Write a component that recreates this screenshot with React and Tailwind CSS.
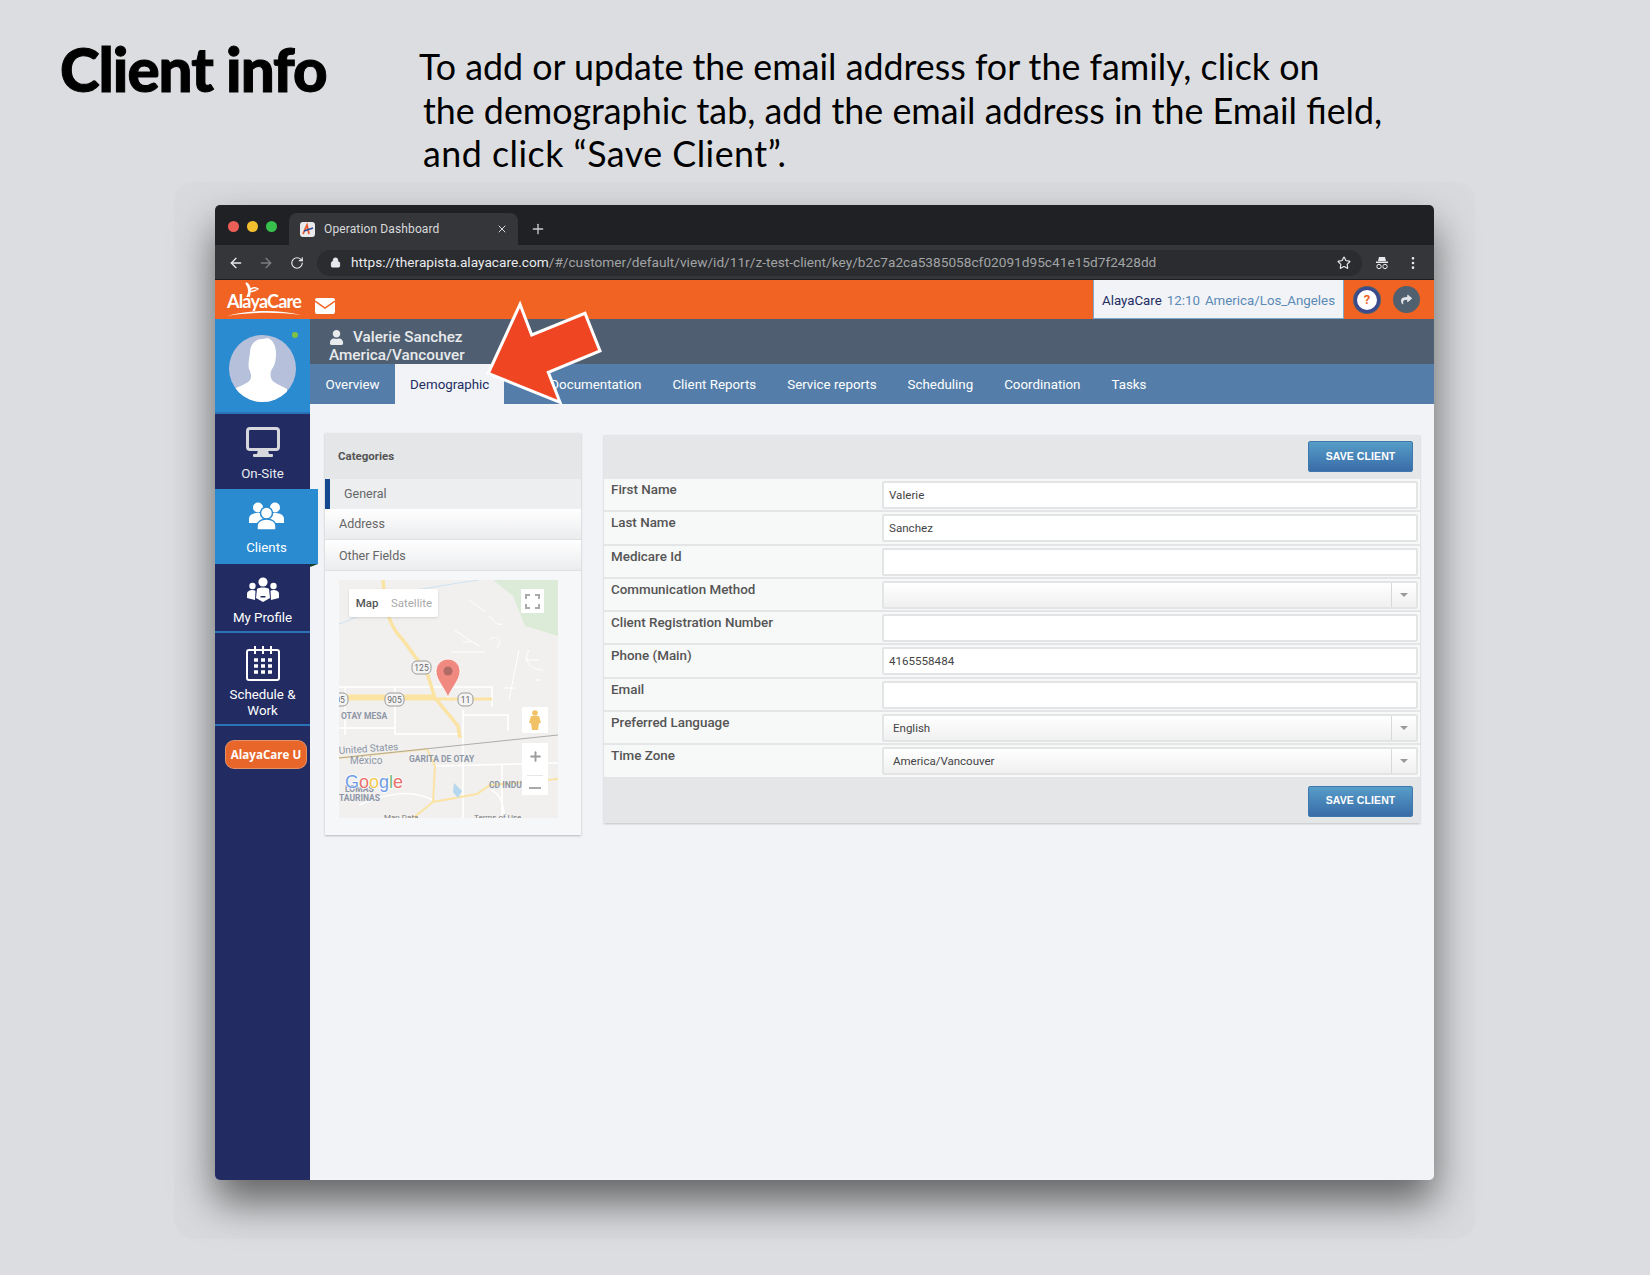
import { ArrowLeft, ArrowRight, RotateCw, Lock, Star, MoreVertical, X, Plus } from "lucide-react";
import { FaUser, FaShare } from "react-icons/fa";

const tabs = [
  { label: "Overview" },
  { label: "Demographic", active: true },
  { label: "Documentation", gap: true },
  { label: "Client Reports" },
  { label: "Service reports" },
  { label: "Scheduling" },
  { label: "Coordination" },
  { label: "Tasks" },
];

const fields = [
  { label: "First Name", value: "Valerie" },
  { label: "Last Name", value: "Sanchez" },
  { label: "Medicare Id", value: "" },
  { label: "Communication Method", value: "", select: true },
  { label: "Client Registration Number", value: "" },
  { label: "Phone (Main)", value: "4165558484" },
  { label: "Email", value: "" },
  { label: "Preferred Language", value: "English", select: true },
  { label: "Time Zone", value: "America/Vancouver", select: true },
];

function MonitorIcon() {
  return (
    <svg width="34" height="32" viewBox="0 0 34 32">
      <rect x="1.5" y="1.5" width="31" height="21" rx="2.5" fill="#222c63" stroke="#d6d8de" strokeWidth="3" />
      <path d="M12 23h10l1 4h-12z" fill="#d6d8de" />
      <rect x="7" y="27" width="20" height="3" rx="1" fill="#d6d8de" />
    </svg>
  );
}

function ClientsIcon() {
  return (
    <svg width="35" height="29" viewBox="0 0 35 29" fill="#fff">
      <circle cx="9" cy="5.500" r="5" />
      <circle cx="26" cy="5.500" r="5" />
      <path d="M0 21v-4c0-4 4-6 9-6s9 2 9 6v4z" />
      <path d="M17 21v-4c0-4 4-6 9-6s9 2 9 6v4z" />
      <circle cx="17.500" cy="11" r="6" stroke="#2a8bd0" strokeWidth="1.500" />
      <path d="M8 28v-4c0-4 4-7 9.500-7s9.500 3 9.500 7v4z" stroke="#2a8bd0" strokeWidth="1.500" />
    </svg>
  );
}

function TeamIcon() {
  return (
    <svg width="34" height="26" viewBox="0 0 34 26" fill="#fff">
      <circle cx="17" cy="5" r="4.600" />
      <path d="M11 12c2-2 10-2 12 0l1 9-7 4-7-4z" />
      <circle cx="6.500" cy="9" r="3.200" />
      <path d="M1 21v-4c0-3 3-4 5.500-4s3 1 3 1l-.5 9z" />
      <circle cx="27.500" cy="9" r="3.200" />
      <path d="M33 21v-4c0-3-3-4-5.500-4s-3 1-3 1l.5 9z" />
      <rect x="14.500" y="19" width="5" height="1.500" fill="#222c63" />
    </svg>
  );
}

function CalendarIcon() {
  return (
    <svg width="34" height="35" viewBox="0 0 34 35" fill="none" stroke="#fff">
      <rect x="1" y="4" width="32" height="30" rx="2" strokeWidth="2" />
      <path d="M9 0v8M17 0v8M25 0v8" strokeWidth="2" />
      <path d="M8 14h4M15 14h4M22 14h4M8 20h4M15 20h4M22 20h4M8 26h4M15 26h4M22 26h4" strokeWidth="3.500" />
    </svg>
  );
}

function Sidebar() {
  return (
    <aside className="w-[95px] shrink-0 bg-[#222c63] text-white text-[13.300px] leading-[16px] text-center">
      <div className="h-[95px] bg-[#2a8bd0] flex items-start justify-center pt-[16px] relative border-b-2 border-[#2a73b8]">
        <div className="w-[67px] h-[67px] rounded-full bg-[#b7c0da] overflow-hidden">
          <svg viewBox="0 0 67 67" className="w-full h-full" fill="#fff">
            <path d="M21 18c0-9 6-14 12-14 3 0 4-1 6-1 5 2 8 8 8 15 0 7-1 12-4 16-2 3-2 8 0 11 2 3 10 6 15 9v13H5V54c5-3 13-5 16-9 2-3 1-7-1-11-1-4 0-10 1-16z" />
          </svg>
        </div>
        <span className="absolute right-[12px] top-[13px] w-[6px] h-[6px] rounded-full bg-[#7ec23f]" />
      </div>
      <div className="h-[75px] flex flex-col items-center pt-[13px] gap-[7px] text-[#e9ebf0]">
        <MonitorIcon />
        <span>On-Site</span>
      </div>
      <div className="h-[75px] w-[103px] bg-[#2a8bd0] flex flex-col items-center pt-[13px] gap-[9px] relative">
        <ClientsIcon />
        <span>Clients</span>
        <span className="absolute right-0 bottom-[-3px] w-0 h-0 border-t-[3px] border-r-[8px] border-t-[#153f2c] border-r-transparent" />
      </div>
      <div className="h-[69px] flex flex-col items-center pt-[13px] gap-[7px] border-b-2 border-[#2a73b8]">
        <TeamIcon />
        <span>My Profile</span>
      </div>
      <div className="h-[93px] flex flex-col items-center pt-[13px] gap-[6px] border-b-2 border-[#2a73b8]">
        <CalendarIcon />
        <span className="px-2">Schedule &amp; Work</span>
      </div>
      <button className="mt-[14px] ml-[10px] w-[82px] h-[29px] rounded-[9px] bg-[#e8662a] border border-[#d9d2c8]/40 font-['Open_Sans',sans-serif] font-bold text-[11.600px] block">
        AlayaCare U
      </button>
    </aside>
  );
}

function MapBox() {
  return (
    <div className="relative w-[219px] h-[238px] mt-[9px] ml-[14px] overflow-hidden bg-[#f1f0ee]">
      <svg viewBox="0 0 219 238" className="absolute inset-0 w-full h-full font-['Roboto',sans-serif]" fill="none">
        <path d="M154 0h65v56l-33-10-12-30z" fill="#dcebd8" />
        <path d="M0 44c20-6 30-16 50-30 30-4 60-10 90-14" stroke="#cfe3f2" strokeWidth="1" />
        <path d="M0 107h153v20M6 107v48M56 107v47h65M0 148h56M96 186l123-3M163 184v54M124 130v108M20 225c30-12 50-16 74-5M152 210c10 4 12 14 14 28M124 135h45v16" stroke="#fff" strokeWidth="1.500" />
        <path d="M146 72h-34M180 70l-10 50M115 50l25 16M150 60c8-6 14 0 8 8M190 70c-8 14 6 20 14 20M130 20l16 12M150 36c6 4 6 10 14 8M124 62h8M186 80h14M196 100h6M176 108h-12" stroke="#fff" strokeWidth="1" />
        <path d="M44 0c2 30 6 46 20 60l24 33 8 25 23 28 2 12" stroke="#fbe3a4" strokeWidth="3.500" />
        <path d="M0 119h153M0 116h96" stroke="#fbe3a4" strokeWidth="3" />
        <path d="M0 178l88-9 8 17-2 36-20 16M94 222l44-8 13-9 68-6" stroke="#fbe3a4" strokeWidth="2" />
        <path d="M0 178L219 155" stroke="#9b9b9b" strokeWidth="0.800" />
        <path d="M115 203l8 8-4 7-5-6z" fill="#b6d8ee" />
        <g fontSize="8.500" fontWeight="700" fill="#8d96a6">
          <text x="2" y="139">OTAY MESA</text>
          <text x="70" y="182">GARITA DE OTAY</text>
          <text x="150" y="208">CD INDU</text>
          <text x="6" y="212">LOMAS</text>
          <text x="0" y="221">TAURINAS</text>
        </g>
        <text x="0" y="174" fontSize="10" fill="#8d96a6" transform="rotate(-4 0 174)">United States</text>
        <text x="11" y="184" fontSize="10" fill="#8d96a6">México</text>
        <text x="45" y="240" fontSize="8" fill="#777">Map Data</text>
        <text x="135" y="240" fontSize="8" fill="#777">Terms of Use</text>
        <g fontSize="8.500" fill="#666" textAnchor="middle">
          <rect x="73" y="81" width="19" height="13" rx="5" fill="#f4f4f4" stroke="#9a9a9a" />
          <text x="82.500" y="91">125</text>
          <rect x="46" y="113" width="19" height="13" rx="5" fill="#f4f4f4" stroke="#9a9a9a" />
          <text x="55.500" y="123">905</text>
          <rect x="-8" y="113" width="17" height="13" rx="5" fill="#f4f4f4" stroke="#9a9a9a" />
          <text x="1" y="123">05</text>
          <rect x="119" y="113" width="15" height="13" rx="5" fill="#f4f4f4" stroke="#9a9a9a" />
          <text x="126.500" y="123">11</text>
        </g>
        <path d="M109 118c-2-9-12-17-12-27a12 12 0 0 1 24 0c0 10-10 18-12 27z" fill="#f08a80" stroke="#fff" strokeWidth="0.800" />
        <circle cx="109" cy="91" r="4.500" fill="#b16b66" />
        <text x="6" y="208" fontSize="18" fontFamily="'Liberation Sans', sans-serif" stroke="#fff" strokeWidth="1.500" className="[paint-order:stroke]">
          <tspan fill="#6f9be6">G</tspan>
          <tspan fill="#e8716a">o</tspan>
          <tspan fill="#f2c94c">o</tspan>
          <tspan fill="#6f9be6">g</tspan>
          <tspan fill="#6fb97a">l</tspan>
          <tspan fill="#e8716a">e</tspan>
        </text>
      </svg>
      <div className="absolute left-[10px] top-[9px] w-[89px] h-[28px] flex bg-white rounded-[2px] text-[11.500px] leading-[28px] shadow-sm">
        <span className="w-[36px] text-center font-medium text-[#555]">Map</span>
        <span className="flex-1 text-center text-[#aaa]">Satellite</span>
      </div>
      <div className="absolute left-[182px] top-[9px] w-[23px] h-[24px] bg-white flex items-center justify-center">
        <svg width="15" height="15" viewBox="0 0 15 15" fill="none" stroke="#aaa" strokeWidth="2">
          <path d="M1 5V1h4M10 1h4v4M14 10v4h-4M5 14H1v-4" />
        </svg>
      </div>
      <div className="absolute left-[183px] top-[127px] w-[26px] h-[26px] bg-white flex items-center justify-center">
        <svg width="12" height="20" viewBox="0 0 12 20" fill="#f2c166">
          <circle cx="6" cy="3" r="2.800" />
          <path d="M2 6h8l2 7h-2l-1 7H3l-1-7H0z" />
        </svg>
      </div>
      <div className="absolute left-[183px] top-[163px] w-[26px] h-[52px] bg-white flex flex-col items-center justify-around text-[#9c9c9c]">
        <Plus size={15} strokeWidth={3} />
        <span className="w-[16px] h-px bg-[#e6e6e6]" />
        <span className="w-[12px] h-[2.500px] bg-[#a9a9a9]" />
      </div>
    </div>
  );
}

function CategoriesPanel() {
  return (
    <div className="w-[256px] h-[402px] bg-[#f6f7f8] shadow-[0_1px_2px_rgba(0,0,0,0.25)] text-[12.500px] text-[#666]">
      <div className="h-[46px] bg-[#e4e6e8] pl-[13px] leading-[46px] text-[11.500px] font-bold text-[#555]">Categories</div>
      <div className="h-[30px] bg-[#eceef0] border-l-[5px] border-[#15488f] pl-[14px] leading-[30px]">General</div>
      <div className="h-[31px] pl-[14px] leading-[30px] bg-gradient-to-b from-white to-[#ebecee] border-b border-[#dfe1e3]">Address</div>
      <div className="h-[31px] pl-[14px] leading-[31px] bg-gradient-to-b from-white to-[#ebecee] border-b border-[#dfe1e3]">Other Fields</div>
      <MapBox />
    </div>
  );
}

function SaveButton() {
  return (
    <button className="w-[105px] h-[31px] rounded-[2px] bg-gradient-to-b from-[#569dc8] to-[#3a6ca8] border border-[#3f78ad] text-white font-['Liberation_Sans',sans-serif] font-bold text-[10.500px] tracking-[0.1px]">
      SAVE CLIENT
    </button>
  );
}

function FieldRow({ field }) {
  return (
    <div className="h-[33.300px] flex bg-[#f7f8f8] border-b-2 border-[#e3e5e7]">
      <div className="w-[278px] pl-[7px] font-medium text-[#555] text-[13.400px] leading-[22px]">{field.label}</div>
      <div className="flex-1 pr-[2px] pt-[2px]">
        {field.select ? (
          <div className="h-[28px] flex rounded-[2px] border-2 border-[#e3e4e6] bg-gradient-to-b from-white to-[#f0f0f0] text-[11.500px] text-[#444] leading-[24px]">
            <span className="flex-1 pl-[9px] border-r border-[#d8d8d8]">{field.value}</span>
            <span className="w-[24px] flex items-center justify-center">
              <span className="w-0 h-0 border-x-[4px] border-x-transparent border-t-[4px] border-t-[#999]" />
            </span>
          </div>
        ) : (
          <div className="h-[28px] rounded-[2px] border-2 border-[#e3e4e6] bg-white pl-[5px] text-[11.600px] text-[#444] leading-[25px]">{field.value}</div>
        )}
      </div>
    </div>
  );
}

function DemographicForm() {
  return (
    <div className="w-[816px] h-[388px] shadow-[0_1px_2px_rgba(0,0,0,0.2)] bg-[#e4e6e8] ml-[23px] mt-[2px]">
      <div className="h-[44px] flex items-start justify-end pt-[6px] pr-[7px]">
        <SaveButton />
      </div>
      {fields.map((f) => <FieldRow key={f.label} field={f} />)}
      <div className="h-[44px] flex items-start justify-end pt-[7px] pr-[7px]">
        <SaveButton />
      </div>
    </div>
  );
}

function BrowserChrome() {
  return (
    <div className="font-['Roboto',sans-serif]">
      <div className="h-[40px] bg-[#202124] flex items-end pl-[13px] relative">
        <div className="flex gap-[8px] items-center self-start mt-[16px]">
          <span className="w-[11px] h-[11px] rounded-full bg-[#ec5f57]" />
          <span className="w-[11px] h-[11px] rounded-full bg-[#f4bf2f]" />
          <span className="w-[11px] h-[11px] rounded-full bg-[#37c04b]" />
        </div>
        <div className="ml-[12px] w-[229px] h-[32px] rounded-t-[8px] bg-[#35363a] flex items-center pl-[11px] text-[#d9dadc] text-[12px]">
          <svg width="15" height="15" viewBox="0 0 15 15">
            <rect width="15" height="15" rx="3" fill="#e9e9ec" />
            <path d="M3 12L7 3l2 9" fill="none" stroke="#e8582a" strokeWidth="1.800" />
            <path d="M4 9l9-3" stroke="#2a4a9c" strokeWidth="1.500" />
          </svg>
          <span className="ml-[9px] tracking-[0.13px]">Operation Dashboard</span>
          <X size={12} className="ml-[56px] text-[#d9dadc]" />
        </div>
        <Plus size={16} className="ml-[12px] mb-[8px] text-[#c9cacc]" />
      </div>
      <div className="h-[35px] bg-[#35363a] flex items-center pt-[1px] border-b border-[#1d1e20] text-[#e8eaed]">
        <ArrowLeft size={16} className="ml-[13px]" />
        <ArrowRight size={16} className="ml-[14px] text-[#7d7e80]" />
        <RotateCw size={14} className="ml-[16px]" />
        <div className="ml-[13px] w-[1045px] h-[26px] rounded-full bg-[#2a2c2f] flex items-center pl-[13px] text-[13.680px]">
          <Lock size={11} className="fill-[#e8eaed]" />
          <span className="ml-[10px]">https://therapista.alayacare.com</span>
          <span className="text-[#a2a4a6]">/#/customer/default/view/id/11r/z-test-client/key/b2c7a2ca5385058cf02091d95c41e15d7f2428dd</span>
          <Star size={14} className="ml-auto mr-[11px]" />
        </div>
        <svg width="14" height="14" viewBox="0 0 14 14" className="ml-[13px]" fill="#e8eaed">
          <path d="M4 1h6l1 4H3zM1 5.500h12V7H1z" />
          <circle cx="4" cy="10.500" r="2.200" fill="none" stroke="#e8eaed" />
          <circle cx="10" cy="10.500" r="2.200" fill="none" stroke="#e8eaed" />
        </svg>
        <MoreVertical size={16} className="ml-[16px]" />
      </div>
    </div>
  );
}

function TopBar() {
  return (
    <div className="h-[39px] bg-[#f06322] flex items-stretch font-['Roboto',sans-serif]">
      <div className="relative w-[100px] pl-[12px] text-white">
        <svg width="28" height="15" viewBox="0 0 28 15" className="absolute left-[26px] top-[2px]" fill="none" stroke="#fff" strokeWidth="1.500">
          <path d="M6 15C9 10 8 5 5 1c4 2 5 7 3 14M8 9c3-4 7-4 9-2-3 2-6 3-9 2z" />
        </svg>
        <span className="block mt-[11px] font-['Lato',sans-serif] font-bold text-[18px] leading-[20px] tracking-[-0.8px]">AlayaCare</span>
        <svg width="74" height="6" viewBox="0 0 74 6" className="absolute left-[12px] bottom-[3px]" fill="#fff">
          <path d="M0 6C20 0 50-1 74 5 50 2 25 2 0 6z" />
        </svg>
      </div>
      <div className="flex items-end pb-[5px]">
        <svg width="20" height="16" viewBox="0 0 20 16">
          <rect width="20" height="16" rx="2" fill="#fff" />
          <path d="M0 3l10 7 10-7" fill="none" stroke="#f06322" strokeWidth="1.500" />
        </svg>
      </div>
      <div className="ml-auto w-[251px] bg-[#f1f3f6] border border-[#7ba9cc] border-t-0 flex items-center pl-[8px] pt-[3px] text-[13.300px] gap-[5px] text-[#5a8ab5]">
        <span className="text-[#222c63]">AlayaCare</span>
        <span>12:10</span>
        <span>America/Los_Angeles</span>
      </div>
      <div className="flex items-center pl-[10px] gap-[13px]">
        <span className="w-[26px] h-[26px] rounded-full bg-white border-[3px] border-[#3a4a8c] text-[#f06322] font-bold text-[13px] flex items-center justify-center shadow-[0_0_0_1px_#50606f]">?</span>
        <span className="w-[27px] h-[27px] rounded-full bg-[#50606f] flex items-center justify-center text-[#dfe3e7]">
          <FaShare size={11} />
        </span>
      </div>
      <div className="w-[14px]" />
    </div>
  );
}

function Arrow() {
  return (
    <svg className="absolute left-[265px] top-[90px] pointer-events-none" width="130" height="115" viewBox="0 0 130 115">
      <polygon points="40,9.300 51.700,40 105,18.300 120,56 68.300,77.300 80,107.300 8.300,78.300" fill="#f04522" stroke="#fff" strokeWidth="3" />
    </svg>
  );
}

export default function App() {
  return (
    <div className="w-[1650px] h-[1275px] bg-[#dcdde0] overflow-hidden">
      <header className="h-[205px] flex items-start text-black font-['Lato',sans-serif]">
        <h1 className="ml-[60px] mt-[33px] w-[359px] font-black text-[60px] leading-[72px] tracking-[-1px] [-webkit-text-stroke:1px_black]">Client info</h1>
        <div className="mt-[45px] text-[35.800px] leading-[43.500px]">
          <div>To add or update the email address for the family, click on</div>
          <div className="ml-[4px]">the demographic tab, add the email address in the Email field,</div>
          <div className="ml-[4px] tracking-[0.5px]">and click “Save Client”.</div>
        </div>
      </header>
      <div className="relative ml-[215px] w-[1219px] h-[975px] rounded-[5px] overflow-hidden flex flex-col shadow-[0_22px_40px_rgba(0,0,0,0.55),0_18px_0_41px_rgba(0,0,0,0.012)]">
        <BrowserChrome />
        <TopBar />
        <div className="flex-1 flex min-h-0 font-['Roboto',sans-serif]">
          <Sidebar />
          <main className="flex-1 bg-[#f1f3f6]">
            <div className="h-[45px] bg-[#4f5f71] pl-[19px] pt-[9px] text-[#e8eaec] font-medium text-[15.300px] leading-[18px]">
              <div className="flex items-center">
                <FaUser size={15} className="mr-[9px]" />
                Valerie Sanchez
              </div>
              <div>America/Vancouver</div>
            </div>
            <nav className="h-[40px] bg-[#547ea9] flex text-white text-[13.350px] leading-[42px]">
              {tabs.map((t) => (
                <span key={t.label} className={t.active ? "px-[15px] bg-[#f1f3f6] text-[#222c63]" : t.gap ? "pl-[46px] pr-[15.500px]" : "px-[15.500px]"}>
                  {t.label}
                </span>
              ))}
            </nav>
            <div className="flex items-start pl-[15px] pt-[29px]">
              <CategoriesPanel />
              <DemographicForm />
            </div>
          </main>
        </div>
        <Arrow />
      </div>
    </div>
  );
}
